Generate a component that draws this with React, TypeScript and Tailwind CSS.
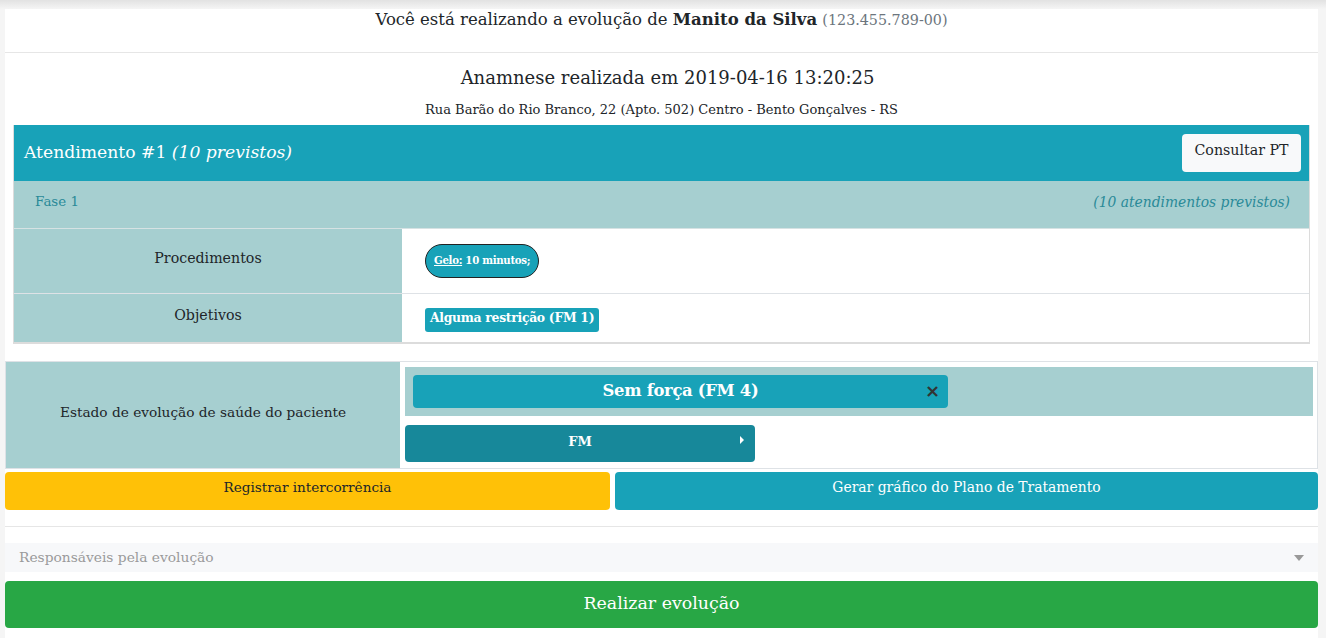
import React from "react";

export default function App() {
  return (
    <div className="min-h-screen bg-[#f5f5f5] font-[family-name:DejaVu_Serif,serif] text-[#212529]">
      <div className="h-[9px] bg-gradient-to-b from-[#e2e2e2] to-[#f5f5f5]" />
      <div className="ml-[5px] mr-[8px] bg-white">
        {/* title */}
        <div className="h-[43px] flex justify-center pt-0 text-[16.5px] leading-[22px]">
          <span>
            Você está realizando a evolução de <b>Manito da Silva</b>{" "}
            <span className="text-[14.3px] text-[#6c757d]">(123.455.789-00)</span>
          </span>
        </div>
        <div className="h-px bg-[#e6e6e6]" />
        <div className="pt-[13px] text-center text-[18px] leading-[24px] pl-[12px]">
          Anamnese realizada em 2019-04-16 13:20:25
        </div>
        <div className="pt-[11px] pb-[6px] text-center text-[13px] leading-[18px]">
          Rua Barão do Rio Branco, 22 (Apto. 502) Centro - Bento Gonçalves - RS
        </div>

        {/* card */}
        <div className="mx-[8px] border-l border-r border-b-2 border-[#dcdcdc]">
          <div className="h-[56px] bg-[#18a2b8] flex items-center justify-between pl-[10px] pr-[8px]">
            <div className="text-white text-[17.2px] leading-[24px] -mt-[2px]">
              Atendimento #1 <i>(10 previstos)</i>
            </div>
            <button className="h-[38px] w-[119px] rounded-[4px] bg-[#f8f9fa] text-[#212529] text-[14.2px] leading-[20px] pb-[6px]">
              Consultar PT
            </button>
          </div>
          <div className="h-[48px] bg-[#a6cfd0] flex items-center justify-between pl-[21px] pr-[19px] border-b border-[#d6e2e3]">
            <span className="text-[#2a8a98] text-[13.4px] leading-[18px] pb-[6px]">Fase 1</span>
            <i className="text-[#2a8a98] text-[13.85px] leading-[18px] pb-[6px]">(10 atendimentos previstos)</i>
          </div>
          <div className="flex h-[65px] border-b border-[#dee2e6]">
            <div className="w-[388px] bg-[#a6cfd0] flex justify-center pt-[19px] text-[14.2px] leading-[20px]">
              Procedimentos
            </div>
            <div className="flex-1 bg-white pl-[23px] pt-[15px]">
              <span className="inline-flex items-center h-[34px] px-[8px] rounded-full border border-[#222] bg-[#18a2b8] text-white text-[10.2px] font-bold tracking-[-0.3px]">
                <span className="underline">Gelo:</span>&nbsp;10 minutos;
              </span>
            </div>
          </div>
          <div className="flex h-[48px]">
            <div className="w-[388px] bg-[#a6cfd0] flex justify-center pt-[11px] text-[14.2px] leading-[20px]">
              Objetivos
            </div>
            <div className="flex-1 bg-white pl-[23px] pt-[11px]">
              <span className="inline-flex items-center h-[24px] px-[5px] rounded-[3px] bg-[#18a2b8] text-white text-[12.4px] font-bold leading-[18px] pb-[4px] tracking-[-0.3px]">
                Alguma restrição (FM 1)
              </span>
            </div>
          </div>
        </div>

        {/* evolution table */}
        <div className="mt-[17px] flex border border-[#dee2e6] h-[108px]">
          <div className="w-[394px] bg-[#a6cfd0] flex items-center justify-center text-[13.7px] leading-[20px] pb-[6px]">
            Estado de evolução de saúde do paciente
          </div>
          <div className="flex-1 p-[5px] pr-[4px]">
            <div className="h-[49px] bg-[#a6cfd0] pl-[8px] pt-[8px]">
              <div className="relative w-[535px] h-[33px] rounded-[4px] bg-[#18a2b8] flex items-center justify-center">
                <span className="text-white font-bold text-[16.4px] leading-[24px] pb-[1px] tracking-[-0.3px]">Sem força (FM 4)</span>
                <span className="absolute right-[8px] top-[6px] text-[#333] font-bold text-[18px] leading-[20px] font-[family-name:DejaVu_Sans,sans-serif]">×</span>
              </div>
            </div>
            <div className="mt-[9px] relative w-[350px] h-[37px] rounded-[4px] bg-[#17889a] flex justify-center pt-[8px]">
              <span className="text-white font-bold text-[13px] leading-[18px]">FM</span>
              <svg className="absolute right-[10px] top-[10px]" width="6" height="10" viewBox="0 0 6 10">
                <path d="M1 1 L5 5 L1 9 Z" fill="white" />
              </svg>
            </div>
          </div>
        </div>

        {/* buttons */}
        <div className="mt-[3px] flex gap-[5px]">
          <button className="w-[605px] h-[38px] rounded-[4px] bg-[#ffc107] text-[#212529] text-[13.6px] leading-[20px] pb-[8px]">
            Registrar intercorrência
          </button>
          <button className="flex-1 h-[38px] rounded-[4px] bg-[#18a2b8] text-white text-[13.9px] leading-[20px] pb-[8px]">
            Gerar gráfico do Plano de Tratamento
          </button>
        </div>

        <div className="mt-[16px] h-px bg-[#e6e6e6]" />

        <div className="mt-[16px] h-[29px] bg-[#f7f8fa] flex items-center justify-between pl-[14px] pr-[14px]">
          <span className="text-[#9a9a9a] text-[13.8px] leading-[18px] pb-[2px]">Responsáveis pela evolução</span>
          <svg width="10" height="6" viewBox="0 0 10 6">
            <path d="M0 0 L10 0 L5 6 Z" fill="#999" />
          </svg>
        </div>

        <button className="mt-[9px] w-full h-[47px] rounded-[4px] bg-[#28a745] text-white text-[17.4px] leading-[24px] pb-[4px]">
          Realizar evolução
        </button>
        <div className="h-[10px]" />
      </div>
    </div>
  );
}
